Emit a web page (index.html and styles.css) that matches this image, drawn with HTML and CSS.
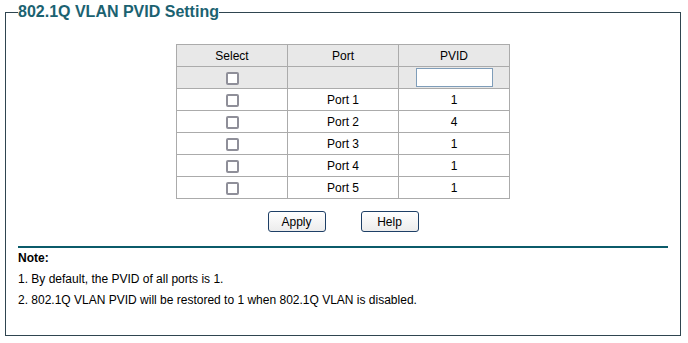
FILE: index.html
```html
<!DOCTYPE html>
<html lang="en">
<head>
    <meta charset="UTF-8">
    <title>802.1Q VLAN PVID Setting</title>
    <link rel="stylesheet" href="styles.css">
</head>
<body>
    <fieldset class="panel">
        <legend>802.1Q VLAN PVID Setting</legend>

        <table class="pvid-table">
            <tr class="head">
                <th>Select</th>
                <th>Port</th>
                <th>PVID</th>
            </tr>
            <tr class="head">
                <td><span class="check"></span></td>
                <td></td>
                <td><input type="text" class="pvid-input"></td>
            </tr>
            <tr><td><span class="check"></span></td><td>Port 1</td><td>1</td></tr>
            <tr><td><span class="check"></span></td><td>Port 2</td><td>4</td></tr>
            <tr><td><span class="check"></span></td><td>Port 3</td><td>1</td></tr>
            <tr><td><span class="check"></span></td><td>Port 4</td><td>1</td></tr>
            <tr><td><span class="check"></span></td><td>Port 5</td><td>1</td></tr>
        </table>

        <div class="buttons">
            <button>Apply</button>
            <button>Help</button>
        </div>

        <div class="note">
            <p class="note-title">Note:</p>
            <p>1. By default, the PVID of all ports is 1.</p>
            <p>2. 802.1Q VLAN PVID will be restored to 1 when 802.1Q VLAN is disabled.</p>
        </div>
    </fieldset>
</body>
</html>
```

FILE: styles.css
```css
body {
    font-family: "Liberation Sans", Arial, sans-serif;
    font-size: 12px;
    color: #000;
    background: #fff;
    margin: 0;
    padding: 0;
}
.panel {
    width: 676px;
    height: 333px;
    box-sizing: border-box;
    margin: 3px 0 0 5px;
    padding: 0 12px;
    border: 1px solid #2f4550;
}
.panel legend {
    font-size: 16px;
    font-weight: bold;
    color: #1b6271;
    padding: 0;
    margin-left: 0;
}
.pvid-table {
    width: 334px;
    margin: 23px auto 0;
    border-collapse: collapse;
}
.pvid-table th,
.pvid-table td {
    border: 1px solid #ababab;
    height: 21px;
    padding: 0;
    text-align: center;
    font-weight: normal;
    width: 33.3%;
}
.pvid-table .head {
    background: #e8e8e8;
}
.check {
    display: inline-block;
    width: 9px;
    height: 9px;
    border: 2px solid #8f8f99;
    border-radius: 2px;
    background: #fff;
    vertical-align: middle;
}
.pvid-input {
    width: 77px;
    height: 19px;
    box-sizing: border-box;
    border: 1px solid #7f9db9;
    padding: 0;
    vertical-align: middle;
}
.buttons {
    display: flex;
    justify-content: center;
    gap: 35px;
    margin-top: 12px;
}
.buttons button {
    width: 58px;
    height: 21px;
    font-family: "Liberation Sans", Arial, sans-serif;
    font-size: 12px;
    color: #000;
    border: 1px solid #1e3f66;
    border-radius: 3px;
    background: linear-gradient(#ffffff, #ececec);
    padding: 0;
}
.note {
    margin-top: 14px;
    border-top: 2px solid #0b5b6a;
}
.note p {
    margin: 0;
    line-height: 21px;
}
.note .note-title {
    font-weight: bold;
}
```
